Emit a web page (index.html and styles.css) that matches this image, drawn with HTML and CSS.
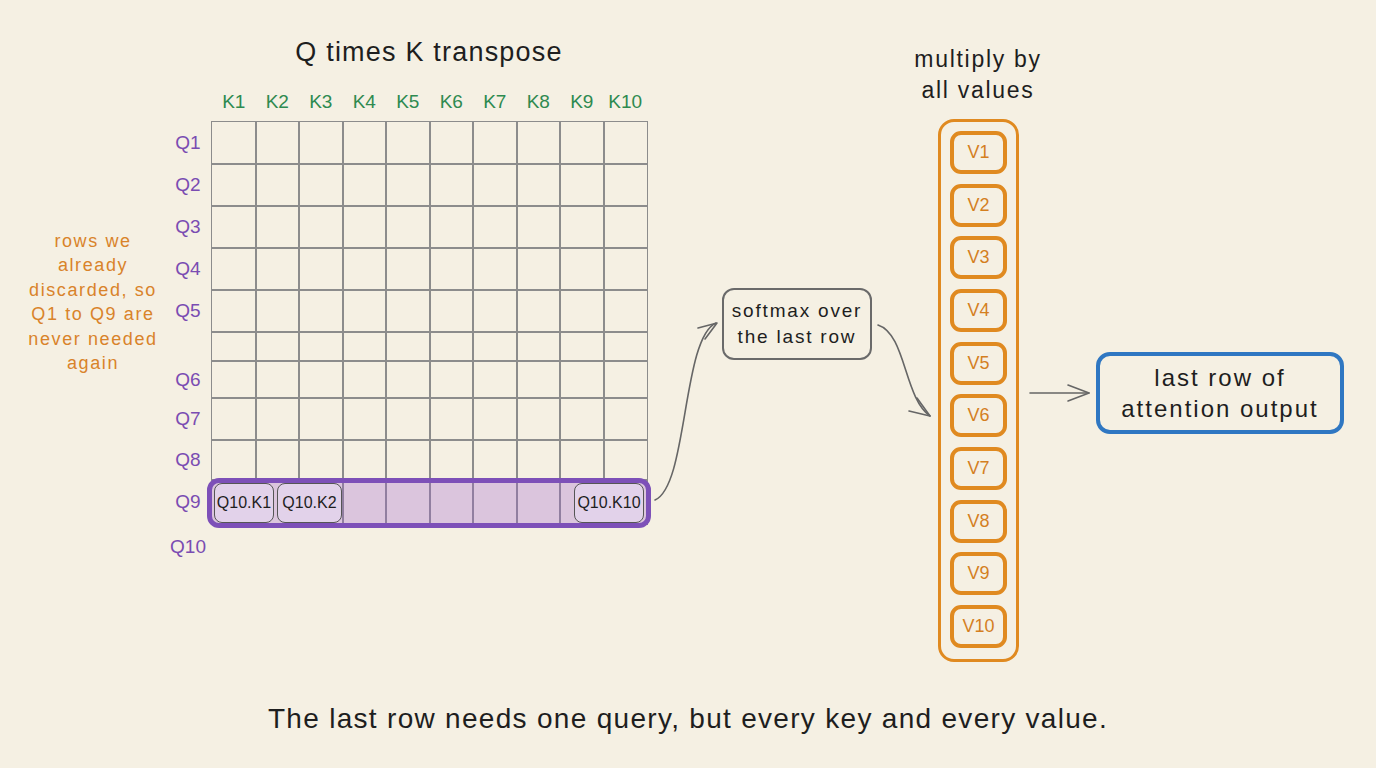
FILE: index.html
```html
<!DOCTYPE html>
<html lang="en">
<head>
<meta charset="utf-8">
<title>Q times K transpose</title>
<link rel="stylesheet" href="styles.css">
</head>
<body>
<div class="canvas">
  <h1 class="title">Q times K transpose</h1>

  <div class="matrix">
    <div class="corner"></div>
    <div class="klabel">K1</div><div class="klabel">K2</div><div class="klabel">K3</div><div class="klabel">K4</div><div class="klabel">K5</div>
    <div class="klabel">K6</div><div class="klabel">K7</div><div class="klabel">K8</div><div class="klabel">K9</div><div class="klabel">K10</div>

    <div class="qlabel">Q1</div>
    <div class="qlabel">Q2</div>
    <div class="qlabel">Q3</div>
    <div class="qlabel">Q4</div>
    <div class="qlabel">Q5</div>
    <div class="qlabel"></div>
    <div class="qlabel">Q6</div>
    <div class="qlabel">Q7</div>
    <div class="qlabel">Q8</div>
    <div class="qlabel">Q9</div>
    <div class="qlabel">Q10</div>

    <div class="cells">
      <div></div><div></div><div></div><div></div><div></div><div></div><div></div><div></div><div></div><div></div>
      <div></div><div></div><div></div><div></div><div></div><div></div><div></div><div></div><div></div><div></div>
      <div></div><div></div><div></div><div></div><div></div><div></div><div></div><div></div><div></div><div></div>
      <div></div><div></div><div></div><div></div><div></div><div></div><div></div><div></div><div></div><div></div>
      <div></div><div></div><div></div><div></div><div></div><div></div><div></div><div></div><div></div><div></div>
      <div></div><div></div><div></div><div></div><div></div><div></div><div></div><div></div><div></div><div></div>
      <div></div><div></div><div></div><div></div><div></div><div></div><div></div><div></div><div></div><div></div>
      <div></div><div></div><div></div><div></div><div></div><div></div><div></div><div></div><div></div><div></div>
      <div></div><div></div><div></div><div></div><div></div><div></div><div></div><div></div><div></div><div></div>
      <div></div><div></div><div></div><div></div><div></div><div></div><div></div><div></div><div></div><div></div>

      <div class="band">
        <div class="prod w1">Q10.K1</div>
        <div class="prod w2">Q10.K2</div>
        <div class="band-gap"></div>
        <div class="prod w3">Q10.K10</div>
      </div>
    </div>
  </div>

  <p class="note">rows we<br>already<br>discarded, so<br>Q1 to Q9 are<br>never needed<br>again</p>

  <div class="softmax">softmax over<br>the last row</div>

  <p class="multiply">multiply by<br>all values</p>

  <div class="values">
    <div class="v">V1</div>
    <div class="v">V2</div>
    <div class="v">V3</div>
    <div class="v">V4</div>
    <div class="v">V5</div>
    <div class="v">V6</div>
    <div class="v">V7</div>
    <div class="v">V8</div>
    <div class="v">V9</div>
    <div class="v">V10</div>
  </div>

  <div class="output">last row of<br>attention output</div>

  <p class="caption">The last row needs one query, but every key and every value.</p>

  <svg class="arrows" width="1376" height="768" viewBox="0 0 1376 768" aria-hidden="true">
    <g fill="none" stroke="#666" stroke-width="1.6" stroke-linecap="round" stroke-linejoin="round">
      <path d="M655 500 C 688 486, 682 338, 716 323"/>
      <path d="M698 328 L717 323 L705 339"/>
      <path d="M878 325 C 906 334, 904 398, 930 416"/>
      <path d="M909 411 L930 416 L917 398"/>
      <path d="M1030 393 L1089 393"/>
      <path d="M1068 385 L1089 393 L1068 401"/>
    </g>
  </svg>
</div>
</body>
</html>
```

FILE: styles.css
```css
* { box-sizing: border-box; }

html, body {
  margin: 0;
  padding: 0;
  background: #f5f0e3;
}

body {
  font-family: "Liberation Sans", Arial, sans-serif;
  color: #1e1e1e;
}

.canvas {
  position: relative;
  width: 1376px;
  height: 768px;
  overflow: hidden;
  background: #f5f0e3;
}

.title {
  position: absolute;
  left: 229px;
  top: 34px;
  width: 400px;
  margin: 0;
  text-align: center;
  font-size: 27px;
  line-height: 36px;
  font-weight: normal;
  letter-spacing: 1.2px;
}

/* ---------- matrix ---------- */
.matrix {
  position: absolute;
  left: 168px;
  top: 82px;
  display: grid;
  grid-template-columns: 44px repeat(10, 43.5px);
  grid-template-rows: 40px 42px 42px 42px 42px 42px 29px 37px 42px 40px 44px 46px;
}

.klabel {
  display: flex;
  align-items: center;
  justify-content: center;
  color: #2e8a50;
  font-size: 19px;
}

.qlabel {
  grid-column: 1;
  display: flex;
  align-items: center;
  justify-content: center;
  padding-right: 4px;
  color: #7a4cb2;
  font-size: 19px;
}

.cells {
  grid-column: 2 / 12;
  grid-row: 2 / 12;
  position: relative;
  display: grid;
  grid-template-columns: repeat(10, 43.5px);
  grid-template-rows: 42px 42px 42px 42px 42px 29px 37px 42px 40px 44px;
}

.cells > div:not(.band) {
  box-shadow: 0 0 0 1px #8c8c8c;
}

.band {
  position: absolute;
  left: -5px;
  bottom: -4px;
  width: 444px;
  height: 50px;
  border: 5px solid #7d50b8;
  border-radius: 12px;
  background: rgba(160, 100, 210, 0.3);
  display: flex;
  gap: 3px;
  padding: 0 2px;
}

.prod {
  display: flex;
  align-items: center;
  justify-content: center;
  background: #e2d2ea;
  border: 1.5px solid #555;
  border-radius: 8px;
  font-size: 16px;
  color: #1e1e1e;
}
.w1 { width: 60px; }
.w2 { width: 65px; }
.w3 { width: 70px; }
.band-gap { flex: 1; }

/* ---------- left note ---------- */
.note {
  position: absolute;
  left: 8px;
  top: 229px;
  width: 170px;
  margin: 0;
  text-align: center;
  color: #d9832a;
  font-size: 18px;
  line-height: 24.4px;
  letter-spacing: 1.6px;
}

/* ---------- softmax ---------- */
.softmax {
  position: absolute;
  left: 722px;
  top: 288px;
  width: 150px;
  height: 72px;
  border: 2px solid #6a6a6a;
  border-radius: 12px;
  display: flex;
  align-items: center;
  justify-content: center;
  text-align: center;
  font-size: 19px;
  line-height: 26px;
  letter-spacing: 1.8px;
  white-space: nowrap;
}

/* ---------- values ---------- */
.multiply {
  position: absolute;
  left: 878px;
  top: 44px;
  width: 200px;
  margin: 0;
  text-align: center;
  font-size: 23px;
  line-height: 31px;
  letter-spacing: 1.7px;
}

.values {
  position: absolute;
  left: 938px;
  top: 119px;
  width: 81px;
  height: 543px;
  border: 3px solid #e08a20;
  border-radius: 16px;
  padding: 9px 9px 11px;
  display: flex;
  flex-direction: column;
  justify-content: space-between;
}

.v {
  height: 43px;
  border: 4px solid #e08a20;
  border-radius: 11px;
  display: flex;
  align-items: center;
  justify-content: center;
  color: #d47f1f;
  font-size: 18px;
}

/* ---------- output ---------- */
.output {
  position: absolute;
  left: 1096px;
  top: 352px;
  width: 248px;
  height: 82px;
  border: 4px solid #2f77c2;
  border-radius: 14px;
  display: flex;
  align-items: center;
  justify-content: center;
  text-align: center;
  font-size: 24px;
  line-height: 31px;
  letter-spacing: 2px;
  white-space: nowrap;
}

/* ---------- caption ---------- */
.caption {
  position: absolute;
  left: 0;
  top: 701px;
  width: 1376px;
  margin: 0;
  text-align: center;
  font-size: 28px;
  line-height: 36px;
  letter-spacing: 1.3px;
}

.arrows {
  position: absolute;
  left: 0;
  top: 0;
  pointer-events: none;
}
```
